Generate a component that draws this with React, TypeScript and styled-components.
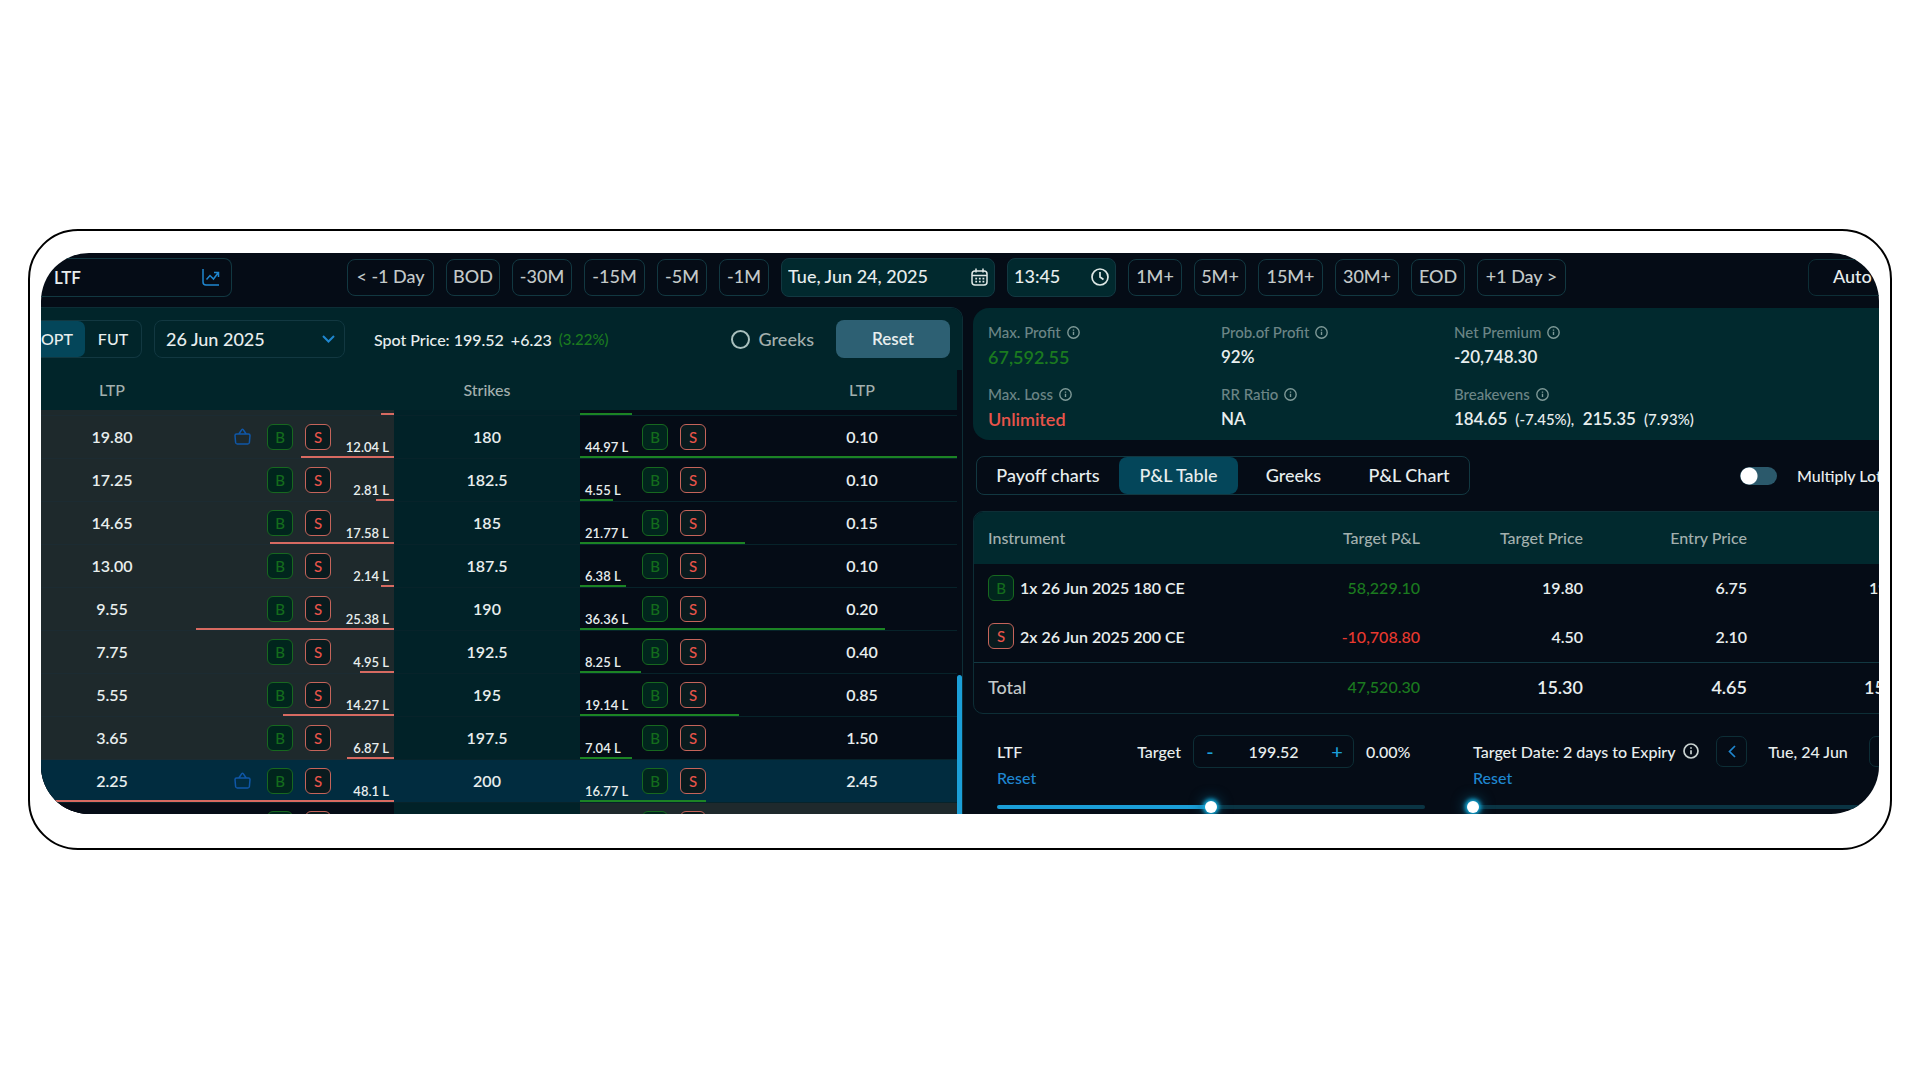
import React, { useState } from "react";
import styled, { createGlobalStyle, css } from "styled-components";

const c = {
  ink: "#050c16",
  panel: "#01252a",
  card: "#01292e",
  line: "#0d2e36",
  edge: "#123841",
  active: "#04465a",
  text: "#e8eeee",
  soft: "#c3c9c9",
  dim: "#a3b0ae",
  muted: "#6c8586",
  blue: "#1f86cf",
  bright: "#1b9fd8",
  green: "#1b7a1f",
  red: "#e8544a",
};

const Global = createGlobalStyle`
  * { box-sizing: border-box; }
  body { margin: 0; background: #fff; }
  body, button, input, select {
    font-family: Lato, "Noto Sans", sans-serif;
    font-size: 16px;
    font-weight: 500;
    color: ${c.text};
  }
  button, input, select { margin: 0; padding: 0; border: 0; background: none; outline: 0; }
  button, select, input { cursor: pointer; }
`;

const Page = styled.main`
  min-height: 100vh;
  display: flex;
  align-items: center;
  padding: 0 28px 1px;
`;

const Frame = styled.div`
  flex: 1;
  min-width: 0;
  border: 2px solid #000;
  border-radius: 50px;
  padding: 22px 11px 34px;
`;

const Screen = styled.div`
  height: 561px;
  overflow: hidden;
  border-radius: 48px;
  background: ${c.ink};
`;

/* ---------- top bar ---------- */

const Toolbar = styled.header`
  display: flex;
  align-items: center;
  gap: 12px;
  height: 54px;
  padding-bottom: 6px;
`;

const Symbol = styled.div`
  display: flex;
  align-items: center;
  justify-content: space-between;
  width: 191px;
  height: 39px;
  margin-right: 103px;
  padding: 0 11px 0 13px;
  border: 1px solid ${c.edge};
  border-left: 0;
  border-radius: 0 8px 8px 0;
  color: ${c.blue};
`;

const SymbolInput = styled.input`
  width: 100px;
  font-size: 17px;
  font-weight: 600;
  cursor: text;
`;

const StepButton = styled.button<{ $w: number }>`
  width: ${(p) => p.$w}px;
  height: 37px;
  padding-bottom: 2px;
  border: 1px solid ${c.edge};
  border-radius: 8px;
  color: ${c.soft};
  font-size: 18px;
  white-space: nowrap;
`;

const Field = styled.label<{ $w: number }>`
  display: flex;
  align-items: center;
  width: ${(p) => p.$w}px;
  height: 39px;
  padding: 0 6px;
  border: 1px solid ${c.edge};
  border-radius: 8px;
  background: ${c.card};
`;

const FieldInput = styled.input`
  flex: 1;
  min-width: 0;
  padding-bottom: 2px;
  font-size: 18px;
  cursor: text;
`;

const Auto = styled.button`
  flex: none;
  width: 120px;
  height: 37px;
  margin-left: auto;
  margin-right: -49px;
  padding: 0 0 2px 24px;
  border: 1px solid ${c.line};
  border-radius: 8px;
  font-size: 18px;
  text-align: left;
`;

/* ---------- columns ---------- */

const Columns = styled.div`
  display: grid;
  grid-template-columns: minmax(0, 922fr) minmax(0, 906fr);
  gap: 10px;
`;

const Chain = styled.section`
  border: 1px solid ${c.line};
  border-left: 0;
  border-radius: 0 12px 0 0;
  background: ${c.ink};
  overflow: hidden;
`;

const Controls = styled.div`
  display: flex;
  align-items: center;
  height: 62px;
  padding-right: 12px;
  background: ${c.panel};
`;

const Segment = styled.div`
  display: flex;
  width: 101px;
  height: 38px;
  margin-right: 12px;
  border: 1px solid ${c.edge};
  border-left: 0;
  border-radius: 0 8px 8px 0;
`;

const SegmentButton = styled.button<{ $on?: boolean }>`
  flex: ${(p) => (p.$on ? "0 0 44px" : "1")};
  padding: 0 ${(p) => (p.$on ? "12px" : "0")} 2px 0;
  border-radius: 0 7px 7px 0;
  background: ${(p) => (p.$on ? c.active : "none")};
`;

const SelectBox = styled.label`
  display: flex;
  align-items: center;
  width: 191px;
  height: 38px;
  padding: 0 9px 0 11px;
  border: 1px solid ${c.edge};
  border-radius: 8px;
  color: ${c.blue};
`;

const Select = styled.select`
  flex: 1;
  appearance: none;
  font-size: 18px;
`;

const Spot = styled.p`
  display: flex;
  align-items: center;
  gap: 7px;
  margin: 0 auto 0 29px;
  white-space: nowrap;
`;

const Green = styled.span`
  color: ${c.green};
  font-size: 15px;
`;

const Radio = styled.label`
  display: flex;
  align-items: center;
  gap: 9px;
  margin-right: 22px;
  color: ${c.dim};
  font-size: 18px;
`;

const RadioInput = styled.input`
  appearance: none;
  width: 19px;
  height: 19px;
  border: 2px solid #a9c0be;
  border-radius: 50%;
`;

const ResetButton = styled.button`
  width: 114px;
  height: 38px;
  padding-bottom: 2px;
  border-radius: 8px;
  background: #2d6073;
  font-weight: 600;
  font-size: 17px;
`;

const ChainBody = styled.div`
  display: flex;
  align-items: flex-start;
`;

const ChainTable = styled.table`
  flex: 1;
  min-width: 0;
  table-layout: fixed;
  border-collapse: collapse;
`;

const ChainHead = styled.th`
  height: 40px;
  padding: 0 0 2px;
  background: ${c.panel};
  color: ${c.dim};
  font-weight: 500;
`;

const tone = { call: "#1e292c", strike: "#012228", put: c.ink, hot: "#012c3f" };

const Cell = styled.td<{ $tone: keyof typeof tone; $stub?: boolean }>`
  position: relative;
  height: ${(p) => (p.$stub ? 6 : 43)}px;
  padding: 0 0 2px;
  background: ${(p) => tone[p.$tone]};
  box-shadow: inset 0 -1px ${(p) => (p.$tone === "call" ? "#1c2b32" : "#07232a")};
  font-weight: 600;
  text-align: center;
`;

const Side = styled.div<{ $put?: boolean }>`
  display: flex;
  align-items: center;
  justify-content: ${(p) => (p.$put ? "flex-start" : "flex-end")};
  gap: 12px;
  height: 36px;
  padding: 0 5px;
`;

const Oi = styled.span<{ $put?: boolean }>`
  align-self: flex-end;
  width: ${(p) => (p.$put ? 45 : 46)}px;
  text-align: ${(p) => (p.$put ? "left" : "right")};
  font-size: 13px;
  line-height: 16px;
  font-weight: 600;
  white-space: nowrap;
`;

const Bar = styled.i<{ $put?: boolean }>`
  position: absolute;
  bottom: 1px;
  z-index: 1;
  height: 2px;
  ${(p) =>
    p.$put
      ? css`left: 0; background: #1c8424;`
      : css`right: 0; background: #d76a61;`}
`;

const Tag = styled.button<{ $sell?: boolean }>`
  flex: none;
  width: 26px;
  height: 26px;
  border: 1px solid ${(p) => (p.$sell ? "#c5645a" : "#17681f")};
  border-radius: 6px;
  background: ${(p) => (p.$sell ? "#0a1b1e" : "#01251d")};
  color: ${(p) => (p.$sell ? c.red : "#146c1c")};
  font-size: 15px;
  line-height: 22px;
`;

const Track = styled.div`
  width: 5px;
  padding-top: 305px;
`;

const Thumb = styled.div`
  height: 300px;
  border-radius: 3px;
  background: ${c.bright};
`;

/* ---------- right side ---------- */

const Detail = styled.section`
  margin-right: -64px;
`;

const Stats = styled.dl`
  display: grid;
  grid-template-columns: 233px 233px 1fr;
  align-content: space-between;
  height: 132px;
  margin: 1px 0 16px;
  padding: 12px 15px 8px;
  border-radius: 16px;
  background: ${c.card};
`;

const Stat = styled.div`
  line-height: 24px;
`;

const StatName = styled.dt`
  display: flex;
  align-items: center;
  gap: 6px;
  color: ${c.muted};
  font-size: 15px;
`;

const StatValue = styled.dd<{ $color?: string }>`
  margin: 0;
  font-size: ${(p) => (p.$color ? 18 : 17)}px;
  font-weight: 600;
  line-height: 26px;
  color: ${(p) => p.$color || c.text};
  white-space: pre;
`;

const Small = styled.small`
  font-size: 15px;
  font-weight: 500;
`;

const TabRow = styled.div`
  display: flex;
  align-items: center;
  justify-content: space-between;
  margin: 0 64px 16px 3px;
`;

const Tabs = styled.div`
  display: flex;
  height: 39px;
  border: 1px solid ${c.edge};
  border-radius: 8px;
`;

const Tab = styled.button<{ $w: number; $on?: boolean }>`
  width: ${(p) => p.$w}px;
  padding-bottom: 2px;
  border-radius: 8px;
  background: ${(p) => (p.$on ? c.active : "none")};
  font-size: 18px;
  white-space: nowrap;
`;

const Toggle = styled.label`
  display: flex;
  align-items: center;
  gap: 20px;
  width: 139px;
  white-space: nowrap;
`;

const Switch = styled.input`
  appearance: none;
  flex: none;
  width: 37px;
  height: 18px;
  border-radius: 9px;
  background: radial-gradient(circle at 9px 9px, #fff 8px, #2b596b 9px);
`;

const TableCard = styled.div`
  border: 1px solid ${c.line};
  border-radius: 10px;
  overflow: hidden;
`;

const PlTable = styled.table`
  width: 100%;
  table-layout: fixed;
  border-collapse: collapse;
`;

const PlHead = styled.th<{ $left?: boolean }>`
  height: 52px;
  padding: 0 0 2px 14px;
  background: ${c.card};
  color: ${c.dim};
  font-weight: 500;
  text-align: ${(p) => (p.$left ? "left" : "right")};
`;

const PlCell = styled.td<{ $left?: boolean; $color?: string; $total?: boolean }>`
  height: ${(p) => (p.$total ? 51 : 49)}px;
  padding: 0 0 2px 14px;
  border-top: ${(p) => (p.$total ? `1px solid ${c.edge}` : "0")};
  color: ${(p) => p.$color || (p.$total && p.$left ? c.soft : c.text)};
  font-size: ${(p) => (p.$total && !p.$color ? 18 : 16)}px;
  font-weight: ${(p) => (p.$color || p.$left ? 500 : 600)};
  text-align: ${(p) => (p.$left ? "left" : "right")};
`;

const Leg = styled.div`
  display: flex;
  align-items: center;
  gap: 6px;
  font-weight: 600;
`;

const Sliders = styled.div`
  display: grid;
  grid-template-columns: 428px 1fr;
  gap: 48px;
  padding: 20px 0 0 24px;
`;

const Control = styled.div`
  display: grid;
  min-width: 0;
`;

const Line = styled.div`
  display: flex;
  align-items: center;
  height: 34px;
  gap: 12px;
  white-space: nowrap;
`;

const Push = styled.label`
  margin-left: auto;
`;

const Stepper = styled.div`
  display: flex;
  width: 161px;
  height: 33px;
  border: 1px solid ${c.line};
  border-radius: 7px;
`;

const Nudge = styled.button`
  width: 32px;
  color: ${c.bright};
  font-size: 20px;
`;

const Amount = styled.input`
  flex: 1;
  min-width: 0;
  text-align: center;
  cursor: text;
`;

const Change = styled.span`
  width: 59px;
`;

const TargetDate = styled.span`
  display: flex;
  align-items: center;
  justify-content: space-between;
  width: 226px;
  margin-right: 5px;
`;

const Square = styled.button`
  display: grid;
  place-items: center;
  flex: none;
  width: 31px;
  height: 31px;
  border: 1px solid ${c.line};
  border-radius: 7px;
  color: ${c.blue};
`;

const DateText = styled.span`
  width: 98px;
  text-align: center;
`;

const LinkButton = styled.a`
  justify-self: start;
  color: ${c.blue};
  line-height: 20px;
  text-decoration: none;
`;

const Range = styled.input<{ $fill: number }>`
  appearance: none;
  width: 100%;
  height: 4px;
  margin-top: 17px;
  border-radius: 2px;
  background: linear-gradient(to right, ${c.bright} ${(p) => p.$fill}%, #0a3443 ${(p) => p.$fill}%);

  &::-webkit-slider-thumb {
    appearance: none;
    width: 12px;
    height: 12px;
    border-radius: 50%;
    background: #fff;
    box-shadow: 0 0 4px 2px #12b4e6, 0 0 14px 2px #0b5a78;
  }
`;

const DateRange = styled(Range)`
  margin-left: -6px;
`;

/* ---------- icons ---------- */

const Info = ({ size = 13, color = "#7f9a98" }: { size?: number; color?: string }) => (
  <svg width={size} height={size} viewBox="0 0 16 16" fill="none" stroke={color} strokeWidth="1.7">
    <circle cx="8" cy="8" r="7" />
    <path d="M8 7.2v4M8 4.2v1.6" />
  </svg>
);

const TrendIcon = () => (
  <svg width="18" height="18" viewBox="0 0 18 18" fill="none" stroke="currentColor" strokeWidth="1.5">
    <path d="M1 1v13q0 3 3 3h13M4.500 11.500l3.500-4 3.500 3.500 4.500-6M12 4.500h4.500V9" />
  </svg>
);

const CalendarIcon = () => (
  <svg width="17" height="18" viewBox="0 0 17 18" fill="none" stroke="#dfe8e6" strokeWidth="1.5">
    <rect x="1" y="3" width="15" height="14" rx="3" />
    <path d="M1 7.500h15M5 .5v4M12 .5v4" />
    <path d="M4.300 10.700h9M4.300 13.700h9" strokeDasharray="1.800 1.800" strokeWidth="1.700" />
  </svg>
);

const ClockIcon = () => (
  <svg width="18" height="18" viewBox="0 0 18 18" fill="none" stroke="#dfe8e6" strokeWidth="1.700">
    <circle cx="9" cy="9" r="8" />
    <path d="M9 4v5l3.500 2.500" />
  </svg>
);

const Chevron = () => (
  <svg width="13" height="8" viewBox="0 0 13 8" fill="none" stroke="currentColor" strokeWidth="2">
    <path d="M1 1l5.500 5.500L12 1" />
  </svg>
);

const Back = () => (
  <svg width="8" height="13" viewBox="0 0 8 13" fill="none" stroke="currentColor" strokeWidth="1.700">
    <path d="M7 1L1.500 6.500 7 12" />
  </svg>
);

const Bag = () => (
  <svg width="21" height="17" viewBox="0 0 21 17" fill="none" stroke="#0f57a8" strokeWidth="1.500">
    <path d="M2.500 6h12q1.500 0 1.500 1.500l-.6 7q-.2 1.500-1.700 1.500H3.300q-1.500 0-1.700-1.500l-.6-7Q1 6 2.500 6zM4.800 6l3-4.400q.7-.9 1.400 0l3 4.400" />
  </svg>
);

/* ---------- data ---------- */

type Row = {
  call: string; callOi: string; callBar: number;
  strike: string;
  putOi: string; putBar: number; put: string; held?: boolean;
};

const row = (
  call: string, callOi: string, callBar: number, strike: string,
  putOi: string, putBar: number, put: string, held = false,
): Row => ({ call, callOi, callBar, strike, putOi, putBar, put, held });

const rows: Row[] = [
  row("19.80", "12.04", 93, "180", "44.97", 377, "0.10", true),
  row("17.25", "2.81", 18, "182.5", "4.55", 33, "0.10"),
  row("14.65", "17.58", 124, "185", "21.77", 165, "0.15"),
  row("13.00", "2.14", 13, "187.5", "6.38", 46, "0.10"),
  row("9.55", "25.38", 198, "190", "36.36", 305, "0.20"),
  row("7.75", "4.95", 34, "192.5", "8.25", 61, "0.40"),
  row("5.55", "14.27", 111, "195", "19.14", 159, "0.85"),
  row("3.65", "6.87", 47, "197.5", "7.04", 52, "1.50"),
  row("2.25", "48.1", 353, "200", "16.77", 126, "2.45", true),
];

const before: [string, number][] = [["< -1 Day", 87], ["BOD", 54], ["-30M", 60], ["-15M", 61], ["-5M", 50], ["-1M", 50]];
const after: [string, number][] = [["1M+", 54], ["5M+", 52], ["15M+", 65], ["30M+", 64], ["EOD", 54], ["+1 Day >", 89]];
const tabs: [string, number][] = [["Payoff charts", 142], ["P&L Table", 119], ["Greeks", 111], ["P&L Chart", 120]];

const Pair = () => (
  <>
    <Tag>B</Tag>
    <Tag $sell>S</Tag>
  </>
);

export default function App() {
  const [tab, setTab] = useState("P&L Table");
  const [target, setTarget] = useState(50);
  const [day, setDay] = useState(0);

  return (
    <Page>
      <Global />
      <Frame>
        <Screen>
          <Toolbar>
            <Symbol>
              <SymbolInput aria-label="Symbol" defaultValue="LTF" />
              <TrendIcon />
            </Symbol>
            {before.map(([t, w]) => <StepButton key={t} $w={w}>{t}</StepButton>)}
            <Field $w={214}>
              <FieldInput aria-label="Date" defaultValue="Tue, Jun 24, 2025" />
              <CalendarIcon />
            </Field>
            <Field $w={109}>
              <FieldInput aria-label="Time" defaultValue="13:45" />
              <ClockIcon />
            </Field>
            {after.map(([t, w]) => <StepButton key={t} $w={w}>{t}</StepButton>)}
            <Auto>Auto</Auto>
          </Toolbar>

          <Columns>
            <Chain>
              <Controls>
                <Segment>
                  <SegmentButton $on>OPT</SegmentButton>
                  <SegmentButton>FUT</SegmentButton>
                </Segment>
                <SelectBox>
                  <Select aria-label="Expiry" defaultValue="26 Jun 2025">
                    <option>26 Jun 2025</option>
                  </Select>
                  <Chevron />
                </SelectBox>
                <Spot>
                  <span>Spot Price: 199.52</span>
                  <span>+6.23</span>
                  <Green>(3.22%)</Green>
                </Spot>
                <Radio>
                  <RadioInput type="radio" name="greeks" />
                  Greeks
                </Radio>
                <ResetButton>Reset</ResetButton>
              </Controls>
              <ChainBody>
                <ChainTable>
                  <colgroup>
                    <col width="142" />
                    <col width="211" />
                    <col width="186" />
                    <col width="187" />
                    <col width="190" />
                  </colgroup>
                  <thead>
                    <tr>
                      <ChainHead>LTP</ChainHead>
                      <ChainHead />
                      <ChainHead>Strikes</ChainHead>
                      <ChainHead />
                      <ChainHead>LTP</ChainHead>
                    </tr>
                  </thead>
                  <tbody>
                    <tr>
                      <Cell $stub $tone="call" />
                      <Cell $stub $tone="call"><Bar style={{ width: 13 }} /></Cell>
                      <Cell $stub $tone="strike" />
                      <Cell $stub $tone="put"><Bar $put style={{ width: 52 }} /></Cell>
                      <Cell $stub $tone="put" />
                    </tr>
                    {rows.map((r) => {
                      const hot = r.strike === "200";
                      return (
                        <tr key={r.strike}>
                          <Cell $tone={hot ? "hot" : "call"}>{r.call}</Cell>
                          <Cell $tone={hot ? "hot" : "call"}>
                            <Side>
                              {r.held && <Bag />}
                              <Pair />
                              <Oi>{r.callOi} L</Oi>
                            </Side>
                            <Bar style={{ width: r.callBar }} />
                          </Cell>
                          <Cell $tone={hot ? "hot" : "strike"}>{r.strike}</Cell>
                          <Cell $tone={hot ? "hot" : "put"}>
                            <Side $put>
                              <Oi $put>{r.putOi} L</Oi>
                              <Pair />
                            </Side>
                            <Bar $put style={{ width: r.putBar }} />
                          </Cell>
                          <Cell $tone={hot ? "hot" : "put"}>{r.put}</Cell>
                        </tr>
                      );
                    })}
                    <tr>
                      <Cell $tone="put" />
                      <Cell $tone="put"><Side><Tag aria-label="Buy" /><Tag $sell aria-label="Sell" /><Oi /></Side></Cell>
                      <Cell $tone="strike" />
                      <Cell $tone="call"><Side $put><Oi $put /><Tag aria-label="Buy" /><Tag $sell aria-label="Sell" /></Side></Cell>
                      <Cell $tone="call" />
                    </tr>
                  </tbody>
                </ChainTable>
                <Track><Thumb /></Track>
              </ChainBody>
            </Chain>

            <Detail>
              <Stats>
                <Stat>
                  <StatName>Max. Profit <Info /></StatName>
                  <StatValue $color={c.green}>67,592.55</StatValue>
                </Stat>
                <Stat>
                  <StatName>Prob.of Profit <Info /></StatName>
                  <StatValue>92%</StatValue>
                </Stat>
                <Stat>
                  <StatName>Net Premium <Info /></StatName>
                  <StatValue>-20,748.30</StatValue>
                </Stat>
                <Stat>
                  <StatName>Max. Loss <Info /></StatName>
                  <StatValue $color={c.red}>Unlimited</StatValue>
                </Stat>
                <Stat>
                  <StatName>RR Ratio <Info /></StatName>
                  <StatValue>NA</StatValue>
                </Stat>
                <Stat>
                  <StatName>Breakevens <Info /></StatName>
                  <StatValue>
                    184.65 <Small> (-7.45%),</Small>{"  "}215.35 <Small> (7.93%)</Small>
                  </StatValue>
                </Stat>
              </Stats>

              <TabRow>
                <Tabs>
                  {tabs.map(([t, w]) => (
                    <Tab key={t} $w={w} $on={t === tab} onClick={() => setTab(t)}>{t}</Tab>
                  ))}
                </Tabs>
                <Toggle>
                  <Switch type="checkbox" />
                  Multiply Lot
                </Toggle>
              </TabRow>

              <TableCard>
                <PlTable>
                  <colgroup>
                    <col width="283" />
                    <col width="163" />
                    <col width="163" />
                    <col width="164" />
                    <col width="163" />
                    <col />
                  </colgroup>
                  <thead>
                    <tr>
                      <PlHead $left>Instrument</PlHead>
                      <PlHead>Target P&amp;L</PlHead>
                      <PlHead>Target Price</PlHead>
                      <PlHead>Entry Price</PlHead>
                      <PlHead />
                      <PlHead />
                    </tr>
                  </thead>
                  <tbody>
                    <tr>
                      <PlCell $left><Leg><Tag>B</Tag>1x 26 Jun 2025 180 CE</Leg></PlCell>
                      <PlCell $color={c.green}>58,229.10</PlCell>
                      <PlCell>19.80</PlCell>
                      <PlCell>6.75</PlCell>
                      <PlCell>19.80</PlCell>
                      <PlCell />
                    </tr>
                    <tr>
                      <PlCell $left><Leg><Tag $sell>S</Tag>2x 26 Jun 2025 200 CE</Leg></PlCell>
                      <PlCell $color="#e8392f">-10,708.80</PlCell>
                      <PlCell>4.50</PlCell>
                      <PlCell>2.10</PlCell>
                      <PlCell />
                      <PlCell />
                    </tr>
                    <tr>
                      <PlCell $total $left>Total</PlCell>
                      <PlCell $total $color={c.green}>47,520.30</PlCell>
                      <PlCell $total>15.30</PlCell>
                      <PlCell $total>4.65</PlCell>
                      <PlCell $total>15.30</PlCell>
                      <PlCell $total />
                    </tr>
                  </tbody>
                </PlTable>
              </TableCard>

              <Sliders>
                <Control>
                  <Line>
                    <span>LTF</span>
                    <Push htmlFor="target">Target</Push>
                    <Stepper>
                      <Nudge>-</Nudge>
                      <Amount id="target" defaultValue="199.52" />
                      <Nudge>+</Nudge>
                    </Stepper>
                    <Change>0.00%</Change>
                  </Line>
                  <LinkButton href="#target">Reset</LinkButton>
                  <Range aria-label="Target price" type="range" $fill={target} value={target}
                    onChange={(e) => setTarget(+e.target.value)} />
                </Control>
                <Control>
                  <Line>
                    <TargetDate>
                      Target Date: 2 days to Expiry
                      <Info size={16} color="#c9d2d0" />
                    </TargetDate>
                    <Square aria-label="Previous day"><Back /></Square>
                    <DateText>Tue, 24 Jun</DateText>
                    <Square aria-label="Next day" />
                  </Line>
                  <LinkButton href="#date">Reset</LinkButton>
                  <DateRange aria-label="Target date" type="range" $fill={day} value={day}
                    onChange={(e) => setDay(+e.target.value)} />
                </Control>
              </Sliders>
            </Detail>
          </Columns>
        </Screen>
      </Frame>
    </Page>
  );
}
